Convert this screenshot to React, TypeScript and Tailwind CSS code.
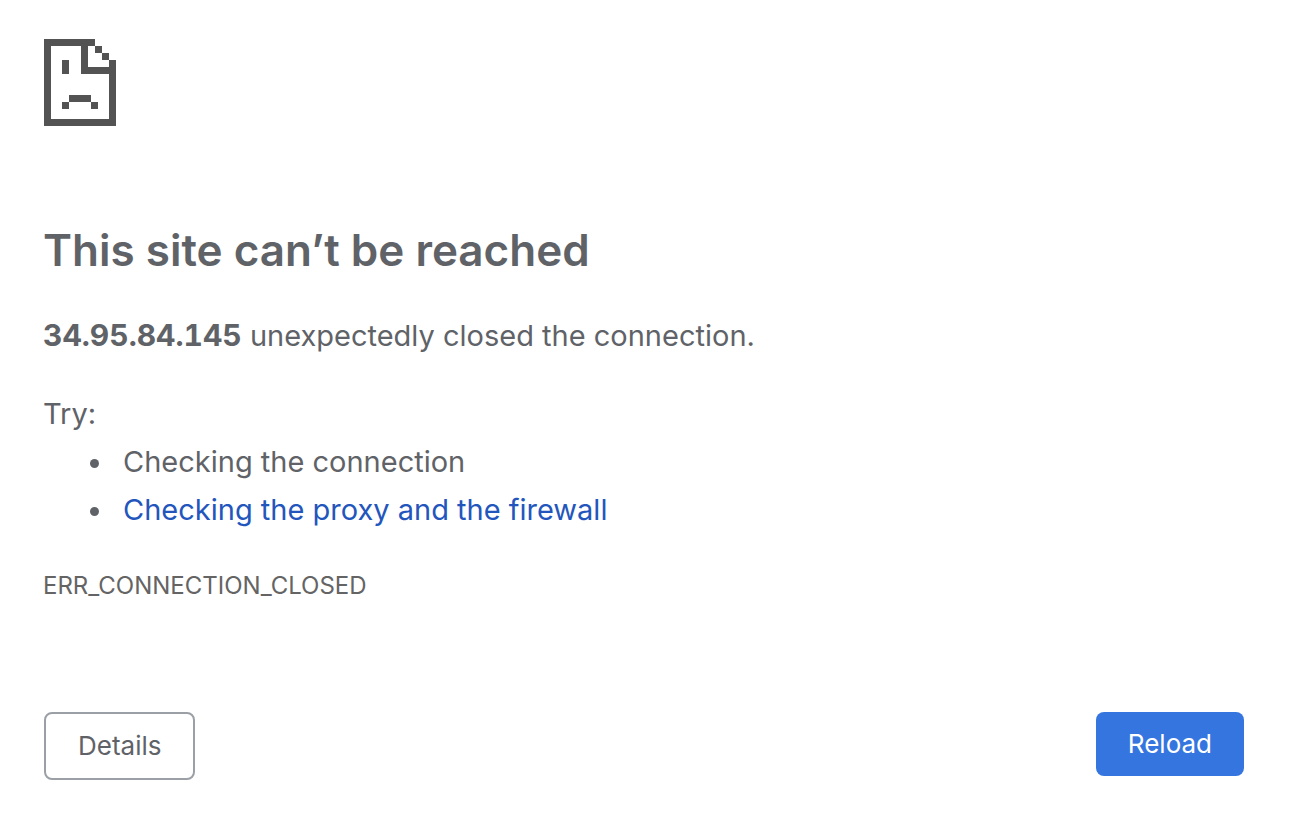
import type { ReactNode } from "react";

const SadPageIcon = () => (
  <svg
    className="h-[87px] w-[72px]"
    viewBox="0 0 72 87"
    shapeRendering="crispEdges"
    fill="#535353"
    aria-hidden="true"
  >
    {/* page outline with the folded corner */}
    <path d="M0 0H51V7H44V28H65V21H72V87H0ZM7 7V80H65V35H37V7Z" fillRule="evenodd" />
    <path d="M51 7h7v7h-7zM58 14h7v7h-7z" />
    {/* face */}
    <path d="M18 21h7v14h-7zM25 56h22v7H25zM18 63h7v7h-7zM47 63h7v7h-7z" />
  </svg>
);

const Suggestion = ({ children }: { children: ReactNode }) => (
  <li className="pl-2">{children}</li>
);

export default function App() {
  return (
    <main className="min-h-screen bg-white pt-[39px] pr-[50px] pb-9 pl-[43px] font-['Inter','Liberation_Sans',sans-serif] text-[#5f6368]">
      <div className="pl-px">
        <SadPageIcon />
      </div>
      <h1 className="mt-24 text-[44px] leading-[56px] font-semibold">This site can’t be reached</h1>
      <p className="mt-[33px] text-[29px] leading-[48px]">
        <strong className="text-[30px] font-bold tabular-nums">34.95.84.145</strong> unexpectedly
        closed the connection.
      </p>
      <div className="mt-[30px] text-[29px] leading-[48px]">
        <p>Try:</p>
        <ul className="list-disc pl-[72px]">
          <Suggestion>Checking the connection</Suggestion>
          <Suggestion>
            <a href="#buttons" className="text-[#2356bd]">
              Checking the proxy and the firewall
            </a>
          </Suggestion>
        </ul>
      </div>
      <p className="mt-8 text-2xl leading-[40px] text-[#646464]">ERR_CONNECTION_CLOSED</p>
      <div id="buttons" className="mt-[106px] flex items-start justify-between pl-px">
        <button
          type="button"
          className="rounded-lg border-2 border-[#9aa0a6] px-8 py-4 text-[26px] leading-8"
        >
          Details
        </button>
        <button
          type="button"
          className="rounded-lg bg-[#3575e0] px-8 py-4 text-[26px] leading-8 text-white"
        >
          Reload
        </button>
      </div>
    </main>
  );
}
